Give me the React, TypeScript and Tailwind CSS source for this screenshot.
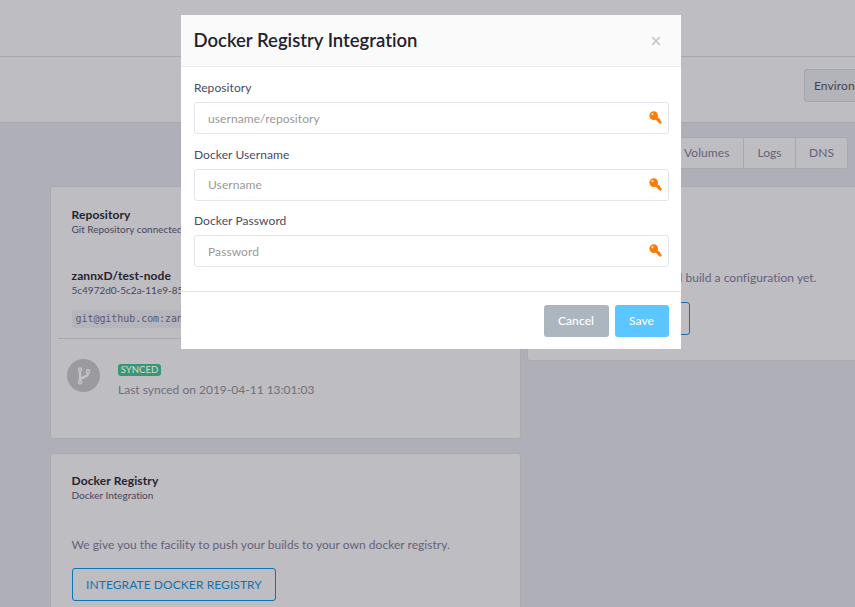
import React from "react";

function KeyIcon() {
  return (
    <svg width="13" height="13" viewBox="0 0 13 13" className="mb-[1px] block">
      <path d="M6.200 6.200 11.300 11.300" stroke="#ff7a00" strokeWidth="2.700" strokeLinecap="round" fill="none" />
      <path d="M8.500 7.400 10.400 8.400" stroke="#ff7a00" strokeWidth="1.600" strokeLinecap="round" />
      <circle cx="4.700" cy="4.600" r="4.300" fill="#ff7a00" />
      <circle cx="3.400" cy="3.200" r="1.100" fill="#ffe3c8" />
    </svg>
  );
}

function BranchIcon() {
  return (
    <svg width="14" height="18" viewBox="0 0 14 18" className="block" fill="none" stroke="#c2c1c6">
      <circle cx="3" cy="2.700" r="1.600" strokeWidth="1.600" />
      <circle cx="3" cy="15.300" r="1.600" strokeWidth="1.600" />
      <circle cx="11" cy="4.400" r="1.600" strokeWidth="1.600" />
      <path d="M3 4.400v9.200M11 6.200c0 4.600-7 3-7.500 6.600" strokeWidth="2.400" />
    </svg>
  );
}

function Field({ label, placeholder, gap, textPad }: { label: string; placeholder: string; gap: string; textPad: string }) {
  return (
    <div className={gap}>
      <div className="h-5 text-[12px] leading-5 tracking-[0.08px] text-[#4b4a63]">{label}</div>
      <div className="mt-1 flex h-8 items-center justify-between rounded-[3px] border border-[#e2e5ef] bg-white pl-[13px] pr-[6px]">
        <span className={`text-[12px] leading-5 tracking-[0.08px] text-[#999] ${textPad}`}>{placeholder}</span>
        <KeyIcon />
      </div>
    </div>
  );
}

function CardHeading({ title, sub }: { title: string; sub: string }) {
  return (
    <div>
      <div className="h-[15px] whitespace-nowrap text-[12px] font-bold leading-4 tracking-[0.12px] text-[#26232f]">{title}</div>
      <div className="h-[15px] whitespace-nowrap text-[10px] leading-[14px] tracking-[-0.01px] text-[#49455c]">{sub}</div>
    </div>
  );
}

export default function App() {
  return (
    <div className="relative flex h-[607px] w-[855px] flex-col overflow-hidden bg-[#afafb9] font-[Lato,sans-serif] text-[12px] [font-variant-ligatures:none]">
      <header className="h-[57px] shrink-0 border-b border-[#a7a7ae] bg-[#bebdc2]" />
      <div className="flex h-[66px] shrink-0 items-start justify-end border-b border-[#a7a7ae] bg-[#bebdc2] pt-3">
        <div className="h-[33px] w-[51px] overflow-hidden whitespace-nowrap rounded-l-[3px] border border-r-0 border-[#a5a6ae] bg-[#b3b4b9] pl-[9px] leading-[32px] tracking-[0.1px] text-[#45434d]">
          Environment
        </div>
      </div>
      <nav className="mt-[14px] flex h-8 shrink-0 justify-end pr-[7px] leading-[30px] text-[#65617a]">
        <div className="w-[74px] border border-r-0 border-[#a8a8b0] bg-[#bebdc2] pl-[14px] tracking-[0.08px]">Volumes</div>
        <div className="w-[52px] border border-r-0 border-[#a8a8b0] bg-[#bebdc2] text-center">Logs</div>
        <div className="w-[53px] rounded-r-[3px] border border-[#a8a8b0] bg-[#bebdc2] text-center">DNS</div>
      </nav>
      <main className="mt-[17px] flex h-[421px] gap-[6px] pl-[50px]">
        <div className="flex w-[471px] shrink-0 flex-col gap-[14px]">
          <section className="h-[253px] shrink-0 rounded-[3px] border border-[#abaab1] bg-[#bebdc2] px-[7px] pt-5">
            <div className="pl-[13.5px]">
              <CardHeading title="Repository" sub="Git Repository connected" />
              <div className="mt-[31px]">
                <CardHeading title="zannxD/test-node" sub="5c4972d0-5c2a-11e9-8513" />
              </div>
              <div className="mt-3 h-[18px] w-[180px] rounded-[3px] bg-[#b5b6bc] pl-1 font-['DejaVu_Sans_Mono',monospace] text-[10px] leading-[18px] tracking-[-0.05px] text-[#5b5775]">
                git@github.com:zannxD
              </div>
            </div>
            <div className="mt-[10px] border-t border-[#aaa9af]" />
            <div className="mt-5 flex pl-[9px]">
              <div className="flex h-[33px] w-[33px] items-center justify-center rounded-full bg-[#9b9a9e]">
                <BranchIcon />
              </div>
              <div className="ml-[18px] pt-[5px]">
                <div className="h-3 w-[43px] rounded-[3px] bg-[#389873] text-center text-[9.5px] font-medium leading-3 text-[#d0d5d2]">SYNCED</div>
                <div className="mt-1 text-[12px] leading-5 text-[#716f78]">Last synced on 2019-04-11 13:01:03</div>
              </div>
            </div>
          </section>
          <section className="h-[180px] shrink-0 rounded-[3px] border border-[#abaab1] bg-[#bebdc2] pl-[20.5px] pt-[19px]">
            <CardHeading title="Docker Registry" sub="Docker Integration" />
            <div className="mt-[32px] h-5 leading-5 tracking-[0.03px] text-[#65617a]">
              We give you the facility to push your builds to your own docker registry.
            </div>
            <div className="ml-[0.5px] mt-[13px] h-[33px] w-[204px] rounded-[3px] border border-[#1272ae] text-center leading-[32px] tracking-[0.08px] text-[#1272ae]">
              INTEGRATE DOCKER REGISTRY
            </div>
          </section>
        </div>
        <section className="h-[175px] w-[360px] shrink-0 rounded-[3px] border border-[#abaab1] bg-[#bebdc2] pt-[81px]">
          <div className="flex h-5 w-[288.5px] justify-end whitespace-nowrap leading-5 tracking-[0.04px] text-[#65617a]">You did not deploy and build a configuration yet.</div>
          <div className="ml-5 mt-[14px] h-[33px] w-[142px] rounded-[3px] border border-[#1272ae]" />
        </section>
      </main>

      <div role="dialog" className="absolute left-[181px] top-[15px] flex h-[334px] w-[500px] flex-col bg-white">
        <div className="flex h-[52px] shrink-0 items-center justify-between border-b border-[#ededed] bg-[#fafafa] pl-[12.5px] pr-5">
          <h2 className="mb-[2px] text-[18.5px] font-semibold leading-6 text-[#242230]">Docker Registry Integration</h2>
          <svg width="10" height="10" viewBox="0 0 10 10" stroke="#c8c8c8" strokeWidth="1.700">
            <path d="M1.200 1.200 8.800 8.800M8.800 1.200 1.200 8.800" />
          </svg>
        </div>
        <div className="h-[224px] shrink-0 pl-[13px] pr-3 pt-[11px]">
          <Field label="Repository" placeholder="username/repository" gap="mt-0" textPad="pt-[2px]" />
          <Field label="Docker Username" placeholder="Username" gap="mt-[11px]" textPad="pt-0" />
          <Field label="Docker Password" placeholder="Password" gap="mt-[10px]" textPad="pt-[2px]" />
        </div>
        <div className="flex h-[58px] justify-end gap-[6px] border-t border-[#e3e4e8] pr-3 pt-[13px] text-[12px] font-medium leading-8 tracking-[0.1px] text-white">
          <button className="h-8 w-[65px] rounded-[3px] bg-[#acb6bf] pr-px">Cancel</button>
          <button className="h-8 w-[54px] rounded-[3px] bg-[#5bc6ff] pr-px">Save</button>
        </div>
      </div>
    </div>
  );
}
